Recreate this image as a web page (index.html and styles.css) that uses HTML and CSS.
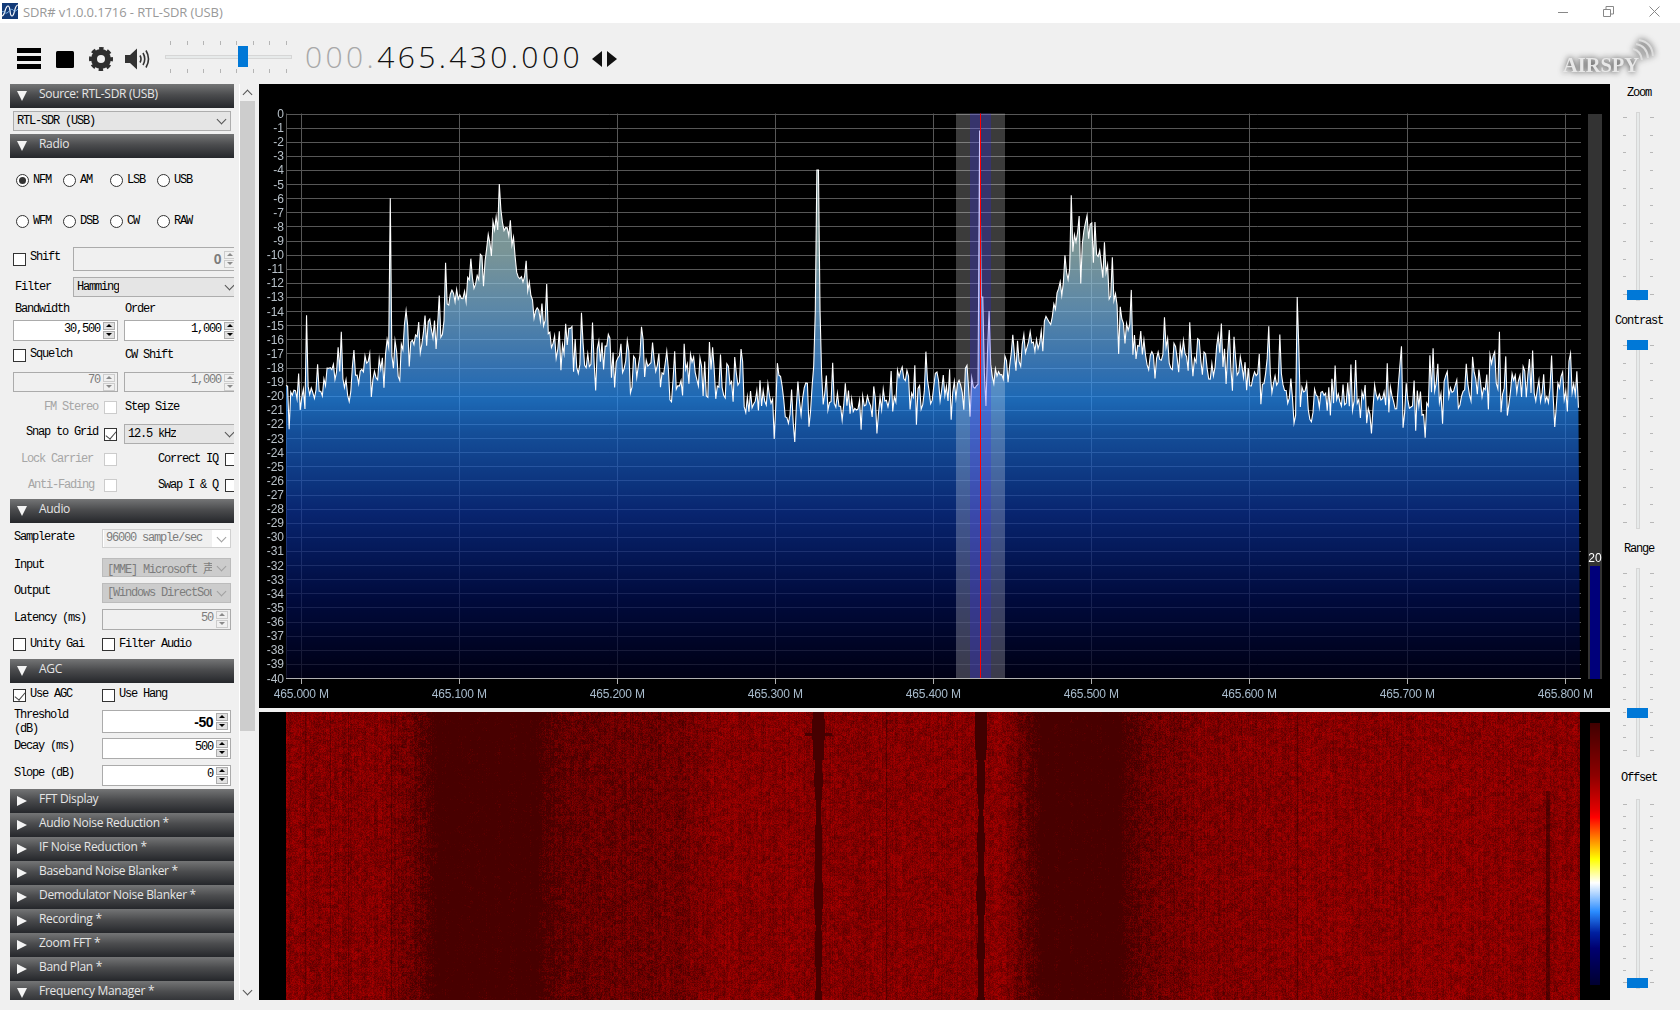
FILE: index.html
```html
<!DOCTYPE html>
<html lang="en">
<head>
    <meta charset="UTF-8">
    <title>SDR# v1.0.0.1716 - RTL-SDR (USB)</title>
    <link rel="stylesheet" href="styles.css">
</head>
<body>

    <div class="titlebar">
        <svg class="app-icon" width="16" height="16" viewBox="0 0 16 16">
            <rect width="16" height="16" fill="#123a78"/>
            <path d="M0 13 C3 13 3 3 6 3 C9 3 7 13 10 13 C13 13 12 2 16 2" fill="none" stroke="#fff" stroke-width="1.2"/>
            <path d="M0 9 C2 7 3 11 5 10 C8 8 9 5 11 7 C13 9 14 8 16 6" fill="none" stroke="#7fb4e8" stroke-width="1"/>
        </svg>
        <span class="title-text">SDR# v1.0.0.1716 - RTL-SDR (USB)</span>
        <div class="win-buttons">
            <svg width="10" height="10" viewBox="0 0 10 10"><path d="M0 5.5H10" stroke="#888"/></svg>
            <svg width="11" height="11" viewBox="0 0 11 11"><path d="M0.5 3.5H7.5V10.5H0.5Z M3 3V0.5H10.5V8H8" fill="none" stroke="#888"/></svg>
            <svg width="11" height="11" viewBox="0 0 11 11"><path d="M0.5 0.5L10.5 10.5M10.5 0.5L0.5 10.5" stroke="#888"/></svg>
        </div>
    </div>

    <div class="toolbar">
        <svg class="ic-menu" width="24" height="21" viewBox="0 0 24 21"><path d="M0 0H24V5H0Z M0 8H24V13H0Z M0 16H24V21H0Z" fill="#000"/></svg>
        <svg class="ic-stop" width="18" height="17" viewBox="0 0 18 17"><rect width="18" height="17" rx="1.5" fill="#000"/></svg>
        <svg class="ic-gear" width="24" height="24" viewBox="0 0 24 24">
            <circle cx="12" cy="12" r="7" fill="none" stroke="#2e2e2e" stroke-width="6"/>
            <circle cx="12" cy="12" r="10.4" fill="none" stroke="#2e2e2e" stroke-width="3.2" stroke-dasharray="4.4 3.77" stroke-dashoffset="2.2"/>
        </svg>
        <svg class="ic-sound" width="25" height="22" viewBox="0 0 25 22">
            <path d="M0 7H5L12 0.5V21.5L5 15H0Z" fill="#333"/>
            <path d="M15 7.5Q17 11 15 14.5M18 5Q21.5 11 18 17M21 2.5Q26 11 21 19.5" fill="none" stroke="#333" stroke-width="1.6"/>
        </svg>
        <div class="volume">
            <div class="hticks" data-count="8"></div>
            <div class="vol-track"><span class="vol-thumb"></span></div>
            <div class="hticks" data-count="8"></div>
        </div>
        <div class="freq"><span class="freq-dim">000.</span>465.430.000</div>
        <svg class="ic-arrows" width="25" height="16" viewBox="0 0 25 16"><path d="M10 0V16L0 8Z M15 0L25 8L15 16Z" fill="#111"/></svg>
        <svg class="logo" width="95" height="40" viewBox="0 0 95 40">
            <text class="logo-text" x="2" y="31" textLength="76" lengthAdjust="spacingAndGlyphs">AIRSPY</text>
            <path d="M72 8Q80 10 81 19M75 3Q86 5 87 17M78 -1Q91 1 92 15" fill="none" stroke="#ddd" stroke-width="2"/>
        </svg>
    </div>

    <div class="main">
        <div class="sidebar">
            <div class="panels">

                <div class="head"><span class="tri-down"></span><span>Source: RTL-SDR (USB)</span></div>
                <div class="body">
                    <div class="row h20 mt3">
                        <div class="select w218"><span class="sel-text">RTL-SDR (USB)</span><span class="chev"></span></div>
                    </div>
                    <div class="h3"></div>
                </div>

                <div class="head"><span class="tri-down"></span><span>Radio</span></div>
                <div class="body">
                    <div class="row radios h20 mt12">
                        <span class="radio-item"><span class="radio on"></span><span class="lbl">NFM</span></span>
                        <span class="radio-item"><span class="radio"></span><span class="lbl">AM</span></span>
                        <span class="radio-item"><span class="radio"></span><span class="lbl">LSB</span></span>
                        <span class="radio-item"><span class="radio"></span><span class="lbl">USB</span></span>
                    </div>
                    <div class="row radios h20 mt21">
                        <span class="radio-item"><span class="radio"></span><span class="lbl">WFM</span></span>
                        <span class="radio-item"><span class="radio"></span><span class="lbl">DSB</span></span>
                        <span class="radio-item"><span class="radio"></span><span class="lbl">CW</span></span>
                        <span class="radio-item"><span class="radio"></span><span class="lbl">RAW</span></span>
                    </div>
                    <div class="row h24 mt16">
                        <span class="cb"></span><span class="lbl cb-lbl w43 up2">Shift</span>
                        <div class="num off w166 h24"><span class="val big grey">0</span><span class="spin dim"><i></i><i></i></span></div>
                    </div>
                    <div class="row h20 mt6">
                        <span class="lbl w58 ml2">Filter</span>
                        <div class="select w166"><span class="sel-text">Hamming</span><span class="chev chev-clip"></span></div>
                    </div>
                    <div class="row h15 mt4">
                        <span class="lbl w111 ml2">Bandwidth</span><span class="lbl">Order</span>
                    </div>
                    <div class="row h21 mt4">
                        <div class="num w105"><span class="val">30,500</span><span class="spin"><i></i><i></i></span></div>
                        <div class="num w115 ml6"><span class="val">1,000</span><span class="spin"><i></i><i></i></span></div>
                    </div>
                    <div class="row h16 mt6">
                        <span class="cb"></span><span class="lbl cb-lbl w95 up1">Squelch</span><span class="lbl">CW Shift</span>
                    </div>
                    <div class="row h20 mt9">
                        <div class="num off w105"><span class="val grey">70</span><span class="spin dim"><i></i><i></i></span></div>
                        <div class="num off w115 ml6"><span class="val grey">1,000</span><span class="spin dim"><i></i><i></i></span></div>
                    </div>
                    <div class="row h18 mt6">
                        <span class="lbl lbl-r w85 disabled">FM Stereo</span><span class="cb cb-off ml6"></span><span class="lbl ml8">Step Size</span>
                    </div>
                    <div class="row h20 mt8">
                        <span class="lbl lbl-r w85 up2">Snap to Grid</span><span class="cb on ml6"></span>
                        <div class="select w115 ml7"><span class="sel-text">12.5 kHz</span><span class="chev chev-clip"></span></div>
                    </div>
                    <div class="row h16 mt7">
                        <span class="lbl lbl-r w85 disabled pr5">Lock Carrier</span><span class="cb cb-off ml6"></span><span class="lbl ml41">Correct IQ</span><span class="cb ml7"></span>
                    </div>
                    <div class="row h16 mt10">
                        <span class="lbl lbl-r w85 disabled pr4">Anti-Fading</span><span class="cb cb-off ml6"></span><span class="lbl ml41">Swap I &amp; Q</span><span class="cb ml7"></span>
                    </div>
                    <div class="h6"></div>
                </div>

                <div class="head"><span class="tri-down"></span><span>Audio</span></div>
                <div class="body">
                    <div class="row h19 mt6">
                        <span class="lbl w89 ml1-in up2">Samplerate</span>
                        <div class="select w129 sel-white"><span class="sel-text grey sel-inner">96000 sample/sec</span><span class="chev chev-grey"></span></div>
                    </div>
                    <div class="row h19 mt10">
                        <span class="lbl w89 ml1-in up3">Input</span>
                        <div class="select w129 sel-off"><span class="sel-text grey clip">[MME] Microsoft 声</span><span class="chev chev-grey"></span></div>
                    </div>
                    <div class="row h20 mt6">
                        <span class="lbl w89 ml1-in up2">Output</span>
                        <div class="select w129 sel-off"><span class="sel-text grey clip">[Windows DirectSou</span><span class="chev chev-grey"></span></div>
                    </div>
                    <div class="row h21 mt6">
                        <span class="lbl w89 ml1-in up2">Latency (ms)</span>
                        <div class="num off w129"><span class="val grey">50</span><span class="spin dim"><i></i><i></i></span></div>
                    </div>
                    <div class="row h16 mt6">
                        <span class="cb"></span><span class="lbl cb-lbl w72">Unity Gai</span><span class="cb"></span><span class="lbl cb-lbl">Filter Audio</span>
                    </div>
                    <div class="h7"></div>
                </div>

                <div class="head"><span class="tri-down"></span><span>AGC</span></div>
                <div class="body">
                    <div class="row h16 mt4">
                        <span class="cb on"></span><span class="lbl cb-lbl w72 up1">Use AGC</span><span class="cb"></span><span class="lbl cb-lbl up1">Use Hang</span>
                    </div>
                    <div class="row h23 mt7">
                        <span class="lbl lbl-wrap w89 ml1-in">Threshold (dB)</span>
                        <div class="num w129 h23"><span class="val big">-50</span><span class="spin"><i></i><i></i></span></div>
                    </div>
                    <div class="row h21 mt5">
                        <span class="lbl w89 ml1-in up3">Decay (ms)</span>
                        <div class="num w129"><span class="val">500</span><span class="spin"><i></i><i></i></span></div>
                    </div>
                    <div class="row h21 mt6">
                        <span class="lbl w89 ml1-in up3">Slope (dB)</span>
                        <div class="num w129"><span class="val">0</span><span class="spin"><i></i><i></i></span></div>
                    </div>
                    <div class="h3"></div>
                </div>

                <div class="head"><span class="tri-right"></span><span>FFT Display</span></div>
                <div class="head"><span class="tri-right"></span><span>Audio Noise Reduction *</span></div>
                <div class="head"><span class="tri-right"></span><span>IF Noise Reduction *</span></div>
                <div class="head"><span class="tri-right"></span><span>Baseband Noise Blanker *</span></div>
                <div class="head"><span class="tri-right"></span><span>Demodulator Noise Blanker *</span></div>
                <div class="head"><span class="tri-right"></span><span>Recording *</span></div>
                <div class="head"><span class="tri-right"></span><span>Zoom FFT *</span></div>
                <div class="head"><span class="tri-right"></span><span>Band Plan *</span></div>
                <div class="head"><span class="tri-down"></span><span>Frequency Manager *</span></div>
            </div>

            <div class="scrollbar">
                <span class="sb-btn"><span class="chev chev-up"></span></span>
                <div class="sb-rail"><div class="sb-thumb"></div></div>
                <span class="sb-btn"><span class="chev"></span></span>
            </div>
        </div>

        <div class="center">
            <div class="spectrum">
                <canvas id="fft" width="1351" height="624"></canvas>
                <div id="axis"></div>
                <div class="level"><span class="level-num">20</span><div class="level-fill"></div></div>
            </div>
            <div class="waterfall">
                <canvas id="wf" width="1351" height="288"></canvas>
                <div class="colorbar"></div>
            </div>
        </div>

        <div class="scales">
            <div class="scale-label">Zoom</div>
            <div class="vslider mt12" data-ticks="11" data-pos="178"></div>
            <div class="scale-label mt11">Contrast</div>
            <div class="vslider mt12" data-ticks="11" data-pos="0"></div>
            <div class="scale-label mt11">Range</div>
            <div class="vslider mt12" data-ticks="15" data-pos="140"></div>
            <div class="scale-label mt12">Offset</div>
            <div class="vslider tall mt14" data-ticks="16" data-pos="179"></div>
        </div>
    </div>

    <script src="script.js"></script>
</body>
</html>
```

FILE: styles.css
```css
* {
    box-sizing: border-box;
}
html, body {
    margin: 0;
    height: 100%;
}
body {
    width: 1680px;
    height: 1010px;
    overflow: hidden;
    background-color: #f0f0f0;
    font-family: "Liberation Mono", "Noto Sans CJK SC", monospace;
    font-size: 12px;
    color: #000;
}

/* title bar */
.titlebar {
    height: 23px;
    background: #fff;
    display: flex;
    align-items: center;
}
.app-icon {
    margin: -2px 0 0 2px;
}
.title-text {
    margin-left: 5px;
    font-family: "Open Sans", sans-serif;
    font-size: 13px;
    letter-spacing: -0.1px;
    color: #999;
}
.win-buttons {
    margin-left: auto;
    margin-right: 20px;
    display: flex;
    align-items: center;
    gap: 35px;
}

/* toolbar */
.toolbar {
    height: 61px;
    display: flex;
    align-items: flex-start;
}
.ic-menu { margin: 25px 0 0 17px; }
.ic-stop { margin: 28px 0 0 15px; }
.ic-gear { margin: 24px 0 0 15px; }
.ic-sound { margin: 25px 0 0 12px; }
.volume {
    width: 127px;
    margin: 18px 0 0 15px;
    height: 32px;
    display: flex;
    flex-direction: column;
}
.hticks {
    height: 4px;
    padding: 0 5px;
    display: flex;
    justify-content: space-between;
}
.hticks span {
    width: 1px;
    height: 4px;
    background: #b5b5b5;
}
.vol-track {
    position: relative;
    height: 4px;
    margin: 10px 0;
    background: #e7eaea;
    border: 1px solid #d6d6d6;
}
.vol-thumb {
    position: absolute;
    left: 72px;
    top: -10px;
    width: 10px;
    height: 21px;
    background: #0078d7;
}
.freq {
    margin: 18px 0 0 13px;
    font-family: "Open Sans", sans-serif;
    font-weight: 300;
    font-size: 30px;
    line-height: 32px;
    letter-spacing: 3.4px;
    color: #111;
    white-space: nowrap;
}
.freq-dim {
    color: #a8a8a8;
}
.ic-arrows {
    margin: 28px 0 0 9px;
}
.logo {
    margin: 18px 24px 0 auto;
    overflow: visible;
    filter: drop-shadow(0 0 3px #222);
}
.logo-text {
    font-family: "Liberation Serif", serif;
    font-weight: bold;
    font-size: 22px;
    fill: #e8e8e8;
}

/* main area */
.main {
    display: flex;
    height: 916px;
}
.sidebar {
    width: 259px;
    padding-left: 10px;
    display: flex;
}
.panels {
    width: 224px;
    height: 916px;
    overflow: hidden;
    flex-shrink: 0;
}
.head {
    height: 24px;
    padding: 2px 0 0 7px;
    display: flex;
    align-items: flex-start;
    background: linear-gradient(#747576, #4b4c4e 45%, #25272b);
    font-family: "Open Sans", sans-serif;
    font-size: 12px;
    line-height: 16px;
    letter-spacing: -0.3px;
    color: #e6e6e6;
}
.tri-down {
    width: 0;
    height: 0;
    margin: 5px 12px 0 0;
    border-left: 5px solid transparent;
    border-right: 5px solid transparent;
    border-top: 10px solid #f4f4f4;
}
.tri-right {
    width: 0;
    height: 0;
    margin: 5px 12px 0 0;
    border-top: 5.5px solid transparent;
    border-bottom: 5.5px solid transparent;
    border-left: 10px solid #f4f4f4;
}
.body {
    padding-left: 3px;
    overflow: hidden;
}
.row {
    display: flex;
    align-items: center;
    white-space: nowrap;
}
.radios {
    padding-left: 3px;
}
.radio-item {
    width: 47px;
    display: flex;
    align-items: center;
    gap: 4px;
}
.radio {
    width: 13px;
    height: 13px;
    border: 1px solid #333;
    border-radius: 50%;
    background: #fff;
    position: relative;
}
.radio.on::after {
    content: "";
    position: absolute;
    left: 2px;
    top: 2px;
    width: 7px;
    height: 7px;
    border-radius: 50%;
    background: #333;
}
.lbl {
    letter-spacing: -1.2px;
    line-height: 14px;
    flex-shrink: 0;
}
.lbl-r {
    text-align: right;
}
.lbl-wrap {
    white-space: normal;
    padding-right: 28px;
}
.disabled {
    color: #a6a6a6;
}
.up1 { position: relative; top: -1px; }
.up2 { position: relative; top: -2px; }
.up3 { position: relative; top: -3px; }
.cb-lbl {
    margin-left: 4px;
}
.cb {
    width: 13px;
    height: 13px;
    border: 1px solid #333;
    background: #fff;
    flex-shrink: 0;
    position: relative;
}
.cb-off {
    border-color: #ccc;
}
.cb.on::after {
    content: "";
    position: absolute;
    left: 3px;
    top: 0;
    width: 5px;
    height: 9px;
    border-right: 1.5px solid #444;
    border-bottom: 1.5px solid #444;
    transform: rotate(40deg);
}
.select {
    height: 100%;
    padding: 0 5px 0 3px;
    display: flex;
    align-items: center;
    justify-content: space-between;
    border: 1px solid #adadad;
    background: #e5e5e5;
    flex-shrink: 0;
}
.sel-text {
    letter-spacing: -1.2px;
    overflow: hidden;
    white-space: nowrap;
}
.sel-white {
    background: #fff;
    border-color: #d0d0d0;
    padding-left: 1px;
}
.sel-inner {
    width: 108px;
    height: 100%;
    padding-left: 2px;
    line-height: 17px;
    background: #f0f0f0;
}
.sel-off {
    background: #cccccc;
    border-color: #bcbcbc;
    padding-left: 4px;
}
.clip {
    width: 105px;
}
.grey {
    color: #7c7c7c;
}
.chev {
    width: 7px;
    height: 7px;
    margin: -3px 0 0 0;
    border-right: 1px solid #555;
    border-bottom: 1px solid #555;
    transform: rotate(45deg);
    flex-shrink: 0;
}
.chev-clip {
    margin-right: 0;
}
.chev-grey {
    border-color: #a0a0a0;
}
.chev-up {
    margin: 3px 0 0 0;
    transform: rotate(225deg);
}
.num {
    height: 100%;
    padding-right: 2px;
    display: flex;
    align-items: center;
    border: 1px solid #ababab;
    background: #fff;
    flex-shrink: 0;
}
.num.off {
    background: #f0f0f0;
}
.val {
    flex: 1;
    position: relative;
    top: -2px;
    text-align: right;
    letter-spacing: -1.2px;
    padding-right: 3px;
}
.val.big {
    top: 0;
    font-family: "Liberation Sans", sans-serif;
    font-weight: bold;
    font-size: 14px;
    letter-spacing: -0.5px;
}
.spin {
    width: 12px;
    display: flex;
    flex-direction: column;
    gap: 1px;
    flex-shrink: 0;
}
.spin i {
    height: 8px;
    display: block;
    position: relative;
    background: #e1e1e1;
    border: 1px solid #adadad;
}
.spin i::after {
    content: "";
    position: absolute;
    left: 2px;
    top: 1px;
    width: 0;
    height: 0;
    border-left: 3px solid transparent;
    border-right: 3px solid transparent;
    border-bottom: 3px solid #000;
}
.spin i:last-child::after {
    border-bottom: 0;
    border-top: 3px solid #000;
}
.spin.dim i {
    background: #f0f0f0;
    border-color: #ccc;
}
.spin.dim i::after {
    border-bottom-color: #8a8a8a;
    border-top-color: #8a8a8a;
}

.w43 { width: 43px; }
.w58 { width: 58px; }
.w72 { width: 72px; }
.w85 { width: 85px; }
.w89 { width: 89px; }
.w95 { width: 95px; }
.w105 { width: 105px; }
.w111 { width: 110px; }
.w115 { width: 115px; }
.w129 { width: 129px; }
.w166 { width: 166px; }
.w218 { width: 218px; }
.h3 { height: 3px; }
.h6 { height: 6px; }
.h7 { height: 7px; }
.h15 { height: 15px; }
.h16 { height: 16px; }
.h18 { height: 18px; }
.h19 { height: 19px; }
.h20 { height: 20px; }
.h21 { height: 21px; }
.h23 { height: 23px; }
.h24 { height: 24px; }
.mt3 { margin-top: 3px; }
.mt4 { margin-top: 4px; }
.mt5 { margin-top: 5px; }
.mt6 { margin-top: 6px; }
.mt7 { margin-top: 7px; }
.mt8 { margin-top: 8px; }
.mt9 { margin-top: 9px; }
.mt10 { margin-top: 10px; }
.mt11 { margin-top: 11px; }
.mt12 { margin-top: 12px; }
.mt14 { margin-top: 14px; }
.mt16 { margin-top: 16px; }
.mt21 { margin-top: 21px; }
.ml2 { margin-left: 2px; }
.ml6 { margin-left: 6px; }
.ml7 { margin-left: 7px; }
.ml8 { margin-left: 8px; }
.ml41 { margin-left: 41px; }
.ml1-in { padding-left: 1px; }
.pr4 { padding-right: 4px; }
.pr5 { padding-right: 5px; }

/* panel scrollbar */
.scrollbar {
    width: 16px;
    margin-left: 5px;
    border-left: 1px solid #fff;
    display: flex;
    flex-direction: column;
    align-items: stretch;
    flex-shrink: 0;
}
.sb-btn {
    height: 17px;
    display: flex;
    align-items: center;
    justify-content: center;
    flex-shrink: 0;
}
.sb-rail {
    flex: 1;
}
.sb-thumb {
    height: 630px;
    background: #cdcdcd;
}

/* spectrum and waterfall */
.center {
    width: 1351px;
    display: flex;
    flex-direction: column;
    gap: 4px;
}
.spectrum, .waterfall {
    position: relative;
    background: #000;
}
.spectrum {
    height: 624px;
}
.waterfall {
    height: 288px;
}
canvas {
    display: block;
}
#axis {
    position: absolute;
    inset: 0;
    font-family: "Liberation Sans", sans-serif;
    font-size: 12px;
    line-height: 14px;
}
.db {
    position: absolute;
    left: 0;
    width: 25px;
    text-align: right;
    color: #b7c0c8;
}
.hz {
    position: absolute;
    top: 603px;
    transform: translateX(-50%);
    white-space: nowrap;
    letter-spacing: -0.2px;
    color: #a9bccd;
}
.level {
    position: absolute;
    left: 1329px;
    top: 30px;
    width: 14px;
    height: 565px;
    padding: 0 2px;
    background: #333;
    display: flex;
    flex-direction: column;
    justify-content: flex-end;
}
.level-num {
    font-family: "Liberation Sans", sans-serif;
    font-size: 12px;
    line-height: 14px;
    margin: 0 -2px 1px;
    text-align: center;
    color: #fff;
}
.level-fill {
    height: 113px;
    background: #00007a;
}
.colorbar {
    position: absolute;
    left: 1331px;
    top: 11px;
    width: 10px;
    height: 262px;
    background: linear-gradient(#400000, #8c0000 20%, #e00000 33%, #ff0000 36%, #ff9000 45%, #ffff00 52%, #ffffff 61%, #2a8cff 72%, #0020a0 80%, #000070 86%, #000030);
}

/* right hand sliders */
.scales {
    width: 70px;
    display: flex;
    flex-direction: column;
    flex-shrink: 0;
}
.scale-label {
    width: 58px;
    height: 16px;
    padding-top: 1px;
    line-height: 16px;
    text-align: center;
    letter-spacing: -1.2px;
}
.vslider {
    position: relative;
    height: 189px;
}
.vslider.tall {
    height: 190px;
}
.vtrack {
    position: absolute;
    left: 26px;
    top: 0;
    bottom: 0;
    width: 4px;
    background: #e7eaea;
    border: 1px solid #d6d6d6;
}
.vticks {
    position: absolute;
    top: 5px;
    bottom: 6px;
    width: 3px;
    display: flex;
    flex-direction: column;
    justify-content: space-between;
}
.vticks.left { left: 13px; }
.vticks.right { left: 40px; }
.vticks span {
    height: 1px;
    background: #b8b8b8;
}
.vticks.left span:first-child,
.vticks.left span:last-child,
.vticks.right span:first-child,
.vticks.right span:last-child {
    width: 4px;
}
.vthumb {
    position: absolute;
    left: 17px;
    width: 21px;
    height: 10px;
    background: #0078d7;
}
```

FILE: script.js
```js
// small seeded generator so the picture is the same on every load
function makeRandom(seed) {
    return function () {
        seed = (seed + 0x6D2B79F5) | 0;
        let t = Math.imul(seed ^ (seed >>> 15), 1 | seed);
        t = (t + Math.imul(t ^ (t >>> 7), 61 | t)) ^ t;
        return ((t ^ (t >>> 14)) >>> 0) / 4294967296;
    };
}

function interpolate(table, x) {
    if (x <= table[0][0]) return table[0][1];
    for (let i = 1; i < table.length; i++) {
        if (x <= table[i][0]) {
            const a = table[i - 1], b = table[i];
            return a[1] + (b[1] - a[1]) * (x - a[0]) / (b[0] - a[0]);
        }
    }
    return table[table.length - 1][1];
}

// page coordinates of the plot
const LEFT = 286, RIGHT = 1580, TOP = 113.5, BOTTOM = 678;
const ORIGIN_X = 259, ORIGIN_Y = 84;
const DB_STEP = (BOTTOM - TOP) / 40;

// mean level of the trace in dB, by page x
const envelope = [
    [286, -20], [330, -19.2], [360, -18.4], [400, -17.6], [427, -15.6], [445, -14.2], [460, -13.2],
    [480, -10.9], [492, -8.6], [500, -7.8], [510, -8.6], [520, -11], [530, -12.8], [540, -14.4],
    [560, -15.9], [590, -17.2], [620, -17.8], [660, -17.8], [700, -18.7], [750, -20], [800, -20.3],
    [850, -20.3], [875, -20.8], [890, -20.2], [905, -18.9], [925, -19.4], [950, -19.8], [978, -19.6],
    [990, -19], [1000, -18.2], [1020, -17.2], [1040, -15.8], [1050, -14.9], [1060, -13], [1070, -10.6],
    [1080, -8.7], [1090, -9], [1100, -9.9], [1110, -12.3], [1120, -14.4], [1130, -15.8], [1150, -17],
    [1200, -17.5], [1240, -18], [1270, -19], [1290, -19.8], [1340, -20], [1400, -20.3], [1450, -19.8],
    [1550, -19.5], [1580, -19.8]
];

// narrow carriers: centre x, half width, top in dB
const spikes = [
    [307, 0.8, -14.3], [390, 1.2, -6], [500, 0.8, -5], [818, 3.5, -14], [818, 1.2, -4],
    [979.4, 1.2, -1.2], [982, 0.8, -13], [989, 0.8, -14], [1071, 0.8, -5.8], [1297, 0.8, -13],
    [1298.5, 0.8, -16.5], [1401, 0.8, -16.5], [1533, 0.8, -16.8]
];

function yOf(db) {
    return TOP - db * DB_STEP;
}

function drawSpectrum() {
    const ctx = document.getElementById("fft").getContext("2d");
    ctx.translate(-ORIGIN_X, -ORIGIN_Y);
    const rand = makeRandom(465430);

    // grid
    ctx.strokeStyle = "#575757";
    ctx.lineWidth = 1;
    ctx.beginPath();
    for (let i = 0; i <= 39; i++) {
        const y = Math.round(TOP + i * DB_STEP) + 0.5;
        ctx.moveTo(LEFT, y);
        ctx.lineTo(RIGHT + 1, y);
    }
    for (let k = 0; k <= 8; k++) {
        const x = Math.round(301.3 + 158 * k) + 0.5;
        ctx.moveTo(x, TOP);
        ctx.lineTo(x, BOTTOM);
    }
    ctx.moveTo(LEFT + 0.5, TOP);
    ctx.lineTo(LEFT + 0.5, BOTTOM);
    ctx.stroke();

    // trace points
    const points = [];
    for (let x = LEFT; x <= RIGHT; x += 1.58) {
        let n = (rand() + rand() + rand() - 1.5) * 1.7;
        const r = rand();
        if (r < 0.1) n += 1 + rand() * 1.6;
        else if (r < 0.17) n -= 0.8 + rand() * 1.4;
        points.push({ x: x, db: interpolate(envelope, x) + n });
    }
    spikes.forEach(function (s) {
        points.forEach(function (p) {
            if (Math.abs(p.x - s[0]) <= s[1]) p.db = Math.max(p.db, s[2]);
        });
    });

    // fill under the trace
    const alpha = 0.72;
    const stop = (r, g, b) => "rgba(" + Math.min(255, r / alpha) + "," + Math.min(255, g / alpha) + "," + Math.min(255, b / alpha) + "," + alpha + ")";
    const grad = ctx.createLinearGradient(0, TOP, 0, BOTTOM);
    [[250, 122, 148, 150], [307, 92, 135, 166], [367, 52, 112, 174], [400, 28, 104, 180],
     [433, 20, 78, 152], [514, 8, 36, 110], [600, 0, 10, 60], [678, 0, 0, 20]].forEach(function (s) {
        grad.addColorStop((s[0] - TOP) / (BOTTOM - TOP), stop(s[1], s[2], s[3]));
    });
    ctx.fillStyle = grad;
    ctx.beginPath();
    ctx.moveTo(LEFT, BOTTOM);
    points.forEach(p => ctx.lineTo(p.x, yOf(p.db)));
    ctx.lineTo(RIGHT, BOTTOM);
    ctx.closePath();
    ctx.fill();

    // trace line
    ctx.strokeStyle = "#fff";
    ctx.lineWidth = 1.1;
    ctx.beginPath();
    points.forEach((p, i) => i ? ctx.lineTo(p.x, yOf(p.db)) : ctx.moveTo(p.x, yOf(p.db)));
    ctx.stroke();

    // passband and tuning line
    ctx.fillStyle = "rgba(255,255,255,0.23)";
    ctx.fillRect(956, TOP, 49, BOTTOM - TOP);
    ctx.fillStyle = "rgba(40,30,255,0.25)";
    ctx.fillRect(970, TOP, 21, BOTTOM - TOP);
    ctx.fillStyle = "#f00";
    ctx.fillRect(980, TOP, 1, BOTTOM - TOP);

    // base line and ticks
    ctx.fillStyle = "#b0b0b0";
    ctx.fillRect(LEFT, Math.round(BOTTOM), RIGHT - LEFT + 1, 1);
    for (let k = 0; k <= 8; k++) {
        ctx.fillRect(Math.round(301.3 + 158 * k), Math.round(BOTTOM), 1, 6);
    }
}

function addAxisLabels() {
    const axis = document.getElementById("axis");
    for (let i = 0; i <= 40; i++) {
        const label = document.createElement("span");
        label.className = "db";
        label.textContent = i === 0 ? "0" : "-" + i;
        label.style.top = (TOP - ORIGIN_Y + i * DB_STEP - 6.5) + "px";
        axis.appendChild(label);
    }
    for (let k = 0; k <= 8; k++) {
        const label = document.createElement("span");
        label.className = "hz";
        label.textContent = (465 + k / 10).toFixed(3) + " M";
        label.style.left = (301.3 + 158 * k - ORIGIN_X) + "px";
        axis.appendChild(label);
    }
}

// red level of the waterfall, by page x
const wfMean = [
    [286, 134], [380, 128], [405, 112], [428, 78], [438, 50], [535, 50], [548, 82], [565, 98], [620, 104],
    [680, 112], [720, 130], [1000, 132], [1018, 108], [1034, 76], [1044, 50], [1118, 50], [1128, 78],
    [1145, 102], [1200, 122], [1300, 134], [1580, 134]
];

function drawWaterfall() {
    const ctx = document.getElementById("wf").getContext("2d");
    const rand = makeRandom(1716);
    const w = RIGHT - LEFT, h = 288;
    const img = ctx.createImageData(w, h);

    const column = [];
    for (let x = 0; x < w; x++) column.push((rand() - 0.5) * 20);

    // coarse blotches laid over the fine grain
    const coarse = [];
    for (let i = 0; i < (w >> 2) * (h >> 2) + w; i++) coarse.push(rand() - 0.5);

    const thin = { 305: 0.72, 330: 0.8, 348: 0.8, 391: 0.72, 886: 0.7, 1297: 0.72, 1401: 0.85 };

    for (let y = 0; y < h; y++) {
        const wobble = Math.sin(y / 9) * 0.6 + Math.sin(y / 23) * 0.5;
        for (let x = 0; x < w; x++) {
            const px = x + LEFT;
            let red = interpolate(wfMean, px) + column[x];
            red += (rand() - 0.5) * 50 + coarse[(y >> 2) * (w >> 2) + (x >> 2)] * 30;
            if (thin[px]) red *= thin[px];
            if (px >= 1546 && px <= 1549 && y > 78) red *= 0.6;
            if (y > 20 && y < 24 && Math.abs(px - 818) < 14) red = 70;

            red = Math.max(72, Math.min(172, red));

            const bulge = y < 48 ? 2 : 0;
            if (Math.abs(px - 818) <= 3.5 + bulge + wobble) red = 70;
            if (Math.abs(px - 980.5) <= 3.5 + bulge + wobble) red = 64;

            const i = (y * w + x) * 4;
            img.data[i] = red;
            img.data[i + 1] = 0;
            img.data[i + 2] = 0;
            img.data[i + 3] = 255;
        }
    }
    ctx.putImageData(img, LEFT - ORIGIN_X, 0);
}

function buildSliders() {
    document.querySelectorAll(".hticks").forEach(function (row) {
        for (let i = 0; i < Number(row.dataset.count); i++) {
            row.appendChild(document.createElement("span"));
        }
    });
    document.querySelectorAll(".vslider").forEach(function (slider) {
        const track = document.createElement("div");
        track.className = "vtrack";
        slider.appendChild(track);
        ["left", "right"].forEach(function (side) {
            const col = document.createElement("div");
            col.className = "vticks " + side;
            for (let i = 0; i < Number(slider.dataset.ticks); i++) {
                col.appendChild(document.createElement("span"));
            }
            slider.appendChild(col);
        });
        const thumb = document.createElement("div");
        thumb.className = "vthumb";
        thumb.style.top = slider.dataset.pos + "px";
        slider.appendChild(thumb);
    });
}

drawSpectrum();
addAxisLabels();
drawWaterfall();
buildSliders();
```
